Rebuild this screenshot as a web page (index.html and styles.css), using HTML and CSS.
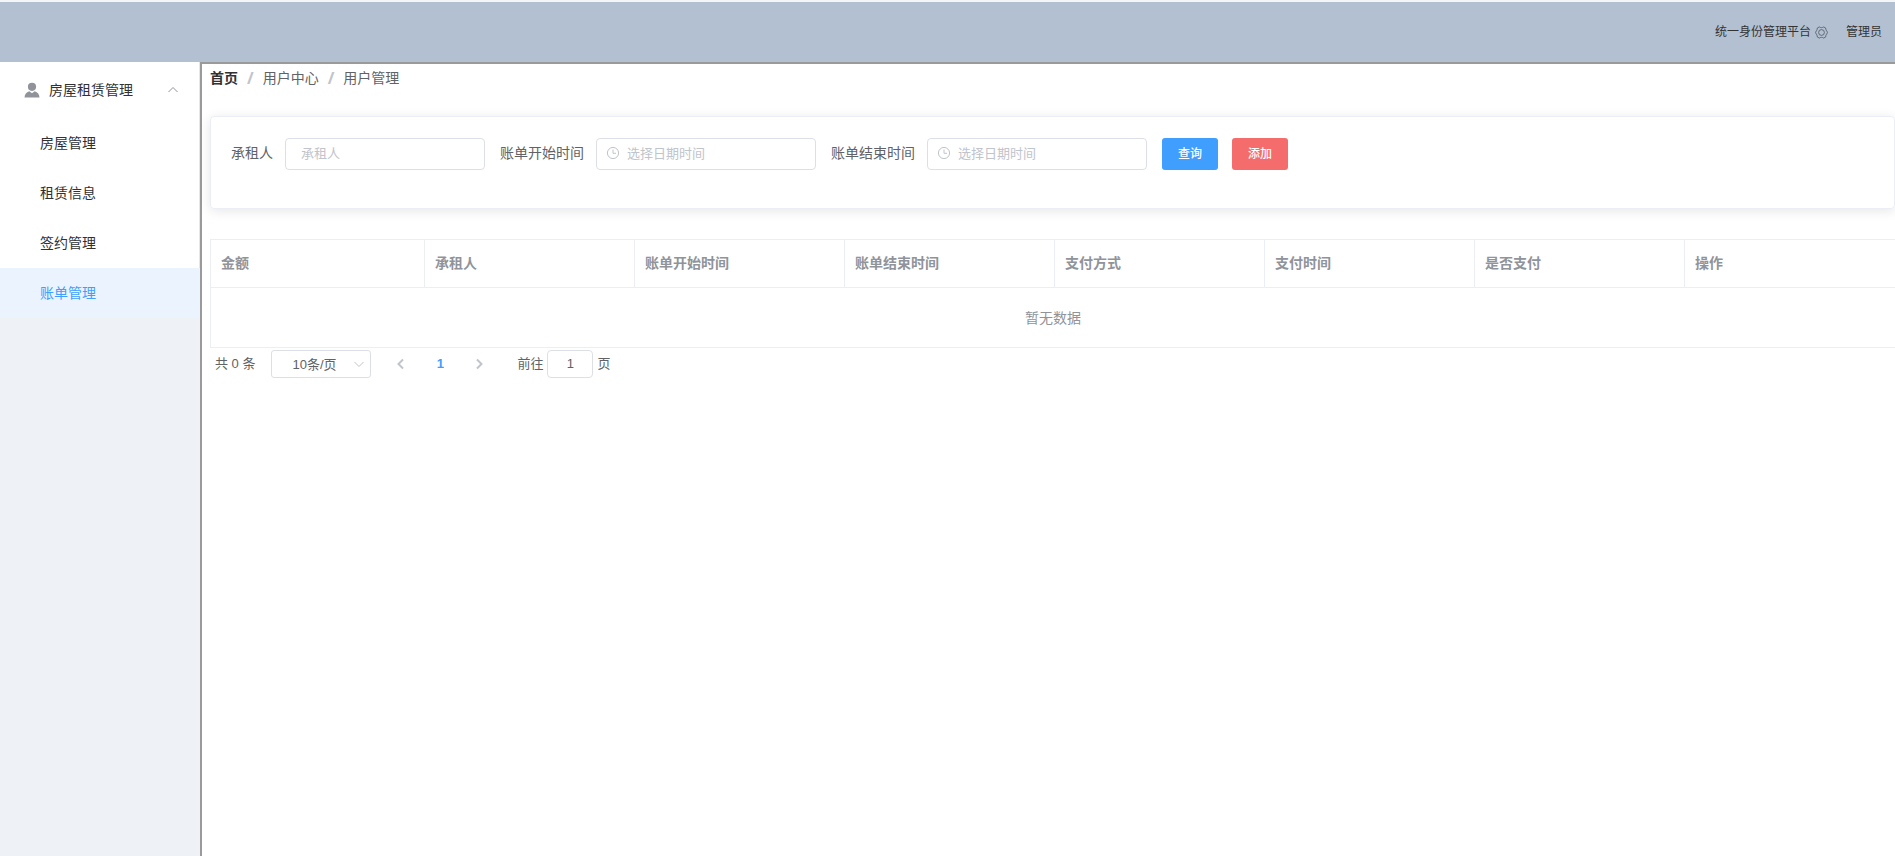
FILE: index.html
```html
<!DOCTYPE html>
<html lang="zh-CN">
<head>
<meta charset="utf-8">
<title>用户管理</title>
<link rel="stylesheet" href="styles.css">
</head>
<body>
<svg class="sprite" aria-hidden="true">
  <symbol id="clock" viewBox="0 0 14 14"><circle cx="7" cy="7" r="5.6"/><path d="M7 3.5V7.3H10"/></symbol>
</svg>
<div class="app">
  <header class="topbar">
    <span class="platform">统一身份管理平台
      <svg class="gear" viewBox="0 0 14 14"><path d="M4.6 1 5.9 1.600Q7 2 8.100 1.600L9.400 1 11.500 2.200 11.700 3.600Q11.900 4.600 12.700 5.400L13.400 7 12.700 8.600Q11.900 9.400 11.700 10.400L11.500 11.800 9.400 13 8.100 12.400Q7 12 5.900 12.400L4.600 13 2.500 11.800 2.300 10.400Q2.100 9.400 1.300 8.600L.6 7 1.300 5.400Q2.100 4.600 2.300 3.600L2.500 2.200Z"/><circle cx="7" cy="7" r="3.1"/></svg>
    </span>
    <span>管理员</span>
  </header>
  <div class="body">
    <aside class="sidebar">
      <nav class="menu">
        <button class="menu-title" type="button" aria-expanded="true">
          <svg class="user" viewBox="0 0 16 16"><circle cx="8" cy="4.8" r="4.1"/><path d="M.5 15.5Q.8 10.6 5.3 9.3L8 11.2 10.7 9.3Q15.200 10.600 15.500 15.500Z"/></svg>
          <span>房屋租赁管理</span>
          <svg class="arrow" viewBox="0 0 12 12"><path d="M1.500 8 6 3.500 10.500 8"/></svg>
        </button>
        <a class="menu-item" href="#">房屋管理</a>
        <a class="menu-item" href="#">租赁信息</a>
        <a class="menu-item" href="#">签约管理</a>
        <a class="menu-item active" href="#">账单管理</a>
      </nav>
    </aside>
    <main class="main">
      <nav class="breadcrumb">
        <a class="home" href="#">首页</a><span class="slash">/</span><span>用户中心</span><span class="slash">/</span><span>用户管理</span>
      </nav>
      <form class="card">
        <div class="field">
          <label for="tenant">承租人</label>
          <input class="control" id="tenant" type="text" placeholder="承租人">
        </div>
        <div class="field">
          <label for="start">账单开始时间</label>
          <div class="date"><svg class="clock"><use href="#clock"/></svg><input class="control" id="start" type="text" placeholder="选择日期时间"></div>
        </div>
        <div class="field">
          <label for="end">账单结束时间</label>
          <div class="date"><svg class="clock"><use href="#clock"/></svg><input class="control" id="end" type="text" placeholder="选择日期时间"></div>
        </div>
        <div class="actions">
          <button class="btn primary" type="button">查询</button>
          <button class="btn danger" type="button">添加</button>
        </div>
      </form>
      <table class="grid">
        <thead>
          <tr><th class="first">金额</th><th>承租人</th><th>账单开始时间</th><th>账单结束时间</th><th>支付方式</th><th>支付时间</th><th>是否支付</th><th>操作</th></tr>
        </thead>
        <tbody>
          <tr><td colspan="8">暂无数据</td></tr>
        </tbody>
      </table>
      <div class="pagination">
        <span>共 0 条</span>
        <div class="size">
          <select aria-label="每页条数"><option>10条/页</option></select>
          <svg class="caret" viewBox="0 0 12 12"><path d="M1.500 4 6 8.500 10.500 4"/></svg>
        </div>
        <div class="pager">
          <button type="button" aria-label="上一页" disabled><svg viewBox="0 0 12 12"><path d="M8 1.500 3.500 6 8 10.500"/></svg></button>
          <button type="button" class="current">1</button>
          <button type="button" aria-label="下一页" disabled><svg viewBox="0 0 12 12"><path d="M4 1.500 8.500 6 4 10.500"/></svg></button>
        </div>
        <div class="jump"><label for="page">前往</label><input id="page" type="text" value="1"><span>页</span></div>
      </div>
    </main>
  </div>
</div>
</body>
</html>
```
FILE: styles.css
```css
* { box-sizing: border-box; }
body {
  margin: 0;
  font: 14px/20px "Liberation Sans", "Noto Sans CJK SC", sans-serif;
  color: #606266;
  background: #fff;
}
a { color: inherit; text-decoration: none; }
button, input, select { font: inherit; color: inherit; margin: 0; }
svg { fill: none; stroke: currentColor; }
.sprite { position: absolute; width: 0; height: 0; }
.app { display: flex; flex-direction: column; min-height: 100vh; border-top: 2px solid #f4f5f7; }
.topbar {
  display: flex;
  align-items: center;
  justify-content: flex-end;
  gap: 18px;
  height: 60px;
  padding-right: 13px;
  background: #b3c0d1;
  color: #333;
  font-size: 12px;
}
.platform { display: flex; align-items: center; gap: 4px; }
.gear { width: 13px; height: 13px; stroke: #5a626c; }
.body { display: flex; flex: 1; }
.sidebar { flex: 0 0 200px; background: #eef1f6; }
.menu { display: flex; flex-direction: column; background: #fff; color: #303133; border-right: 1px solid #e6e6e6; }
.menu-title {
  display: flex;
  align-items: center;
  height: 56px;
  padding: 0 20px 0 24px;
  border: 0;
  background: none;
  text-align: left;
}
.menu-title span { flex: 1; padding-left: 9px; }
.user { width: 16px; height: 16px; fill: #909399; stroke: none; }
.arrow { width: 12px; height: 12px; stroke: #909399; }
.menu-item { display: flex; align-items: center; height: 50px; padding-left: 40px; }
.active { margin-right: -1px; background: #ebf3ff; color: #409eff; }
.main { flex: 1; min-width: 0; padding-left: 8px; border: solid #9a9a9a; border-width: 2px 0 0 2px; }
.breadcrumb { display: flex; padding-top: 4px; }
.home { color: #303133; font-weight: bold; }
.slash { margin: 0 9px; color: #c0c4cc; font: bold 16px/20px "Noto Sans", sans-serif; }
.card {
  display: flex;
  align-items: flex-start;
  gap: 15px;
  min-height: 93px;
  margin-top: 28px;
  padding: 21px 20px;
  border: 1px solid #ebeef5;
  border-radius: 4px;
  box-shadow: 0 2px 12px rgba(0, 0, 0, .1);
}
.field { display: flex; align-items: center; gap: 12px; }
.field label { padding-bottom: 2px; }
.control {
  display: block;
  width: 200px;
  height: 32px;
  padding: 0 15px 2px;
  border: 1px solid #dcdfe6;
  border-radius: 4px;
  background: #fff;
  font-size: 13px;
}
::placeholder { color: #c0c4cc; opacity: 1; }
.date { position: relative; }
.date .control { width: 220px; padding-left: 30px; }
.clock { position: absolute; left: 10px; top: 8px; width: 14px; height: 14px; color: #c0c4cc; }
.actions { display: flex; gap: 14px; }
.btn { width: 56px; height: 32px; padding: 0; border: 0; border-radius: 3px; color: #fff; font-size: 12px; font-weight: 500; }
.primary { background: #409eff; }
.danger { background: #f56c6c; }
.grid { width: 100%; margin-top: 30px; table-layout: fixed; border-collapse: separate; border-spacing: 0; border: solid #ebeef5; border-width: 1px 0 0 1px; color: #909399; }
.grid th { height: 48px; padding: 0 10px 2px; border: solid #ebeef5; border-width: 0 1px 1px 0; text-align: left; }
.grid th:last-child { border-right: 0; }
.first { width: 214px; }
.grid td { height: 60px; padding: 0; border-bottom: 1px solid #ebeef5; text-align: center; }
.pagination { display: flex; align-items: center; padding: 2px 5px; font-size: 13px; line-height: 28px; }
.size { position: relative; margin-left: 16px; }
.size select { display: block; appearance: none; width: 100px; height: 28px; padding: 0 20px; border: 1px solid #dcdfe6; border-radius: 3px; background: #fff; }
.caret { position: absolute; right: 6px; top: 8px; width: 12px; height: 12px; stroke: #c0c4cc; }
.pager { display: flex; gap: 3px; margin-left: 12px; }
.pager button { display: flex; align-items: center; justify-content: center; width: 36px; height: 28px; padding: 0; border: 0; background: none; color: #c0c4cc; }
.pager svg { width: 12px; height: 12px; stroke-width: 2; }
.pager .current { color: #409eff; font-weight: bold; }
.jump { display: flex; align-items: center; gap: 4px; margin-left: 20px; }
.jump input { width: 46px; height: 28px; padding: 0 3px; border: 1px solid #dcdfe6; border-radius: 4px; text-align: center; }
```
